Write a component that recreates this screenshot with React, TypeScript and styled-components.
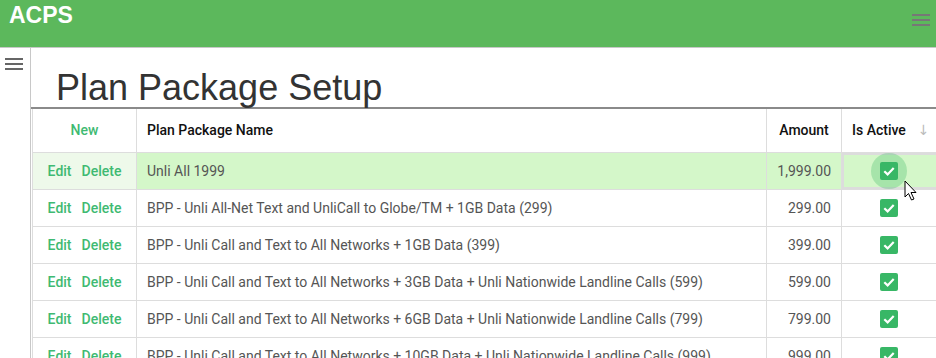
import React from 'react';
import styled, { createGlobalStyle } from 'styled-components';

const GlobalStyle = createGlobalStyle`
  html, body {
    margin: 0;
    padding: 0;
    background: #fff;
    overflow: hidden;
  }
`;

const Page = styled.div`
  width: 936px;
  height: 358px;
  overflow: hidden;
  font-family: Roboto, "Liberation Sans", sans-serif;
`;

const TopBar = styled.header`
  height: 48px;
  background: #5cb85c;
  border-bottom: 1px solid #c8c8c8;
  display: flex;
  justify-content: space-between;
  align-items: flex-start;
  padding: 0 6px 0 9px;
  box-sizing: border-box;
`;

const Brand = styled.div`
  font-family: "Liberation Sans", Arial, sans-serif;
  font-weight: bold;
  font-size: 23px;
  color: #fff;
  line-height: 31px;
`;

const Burger = styled.div<{ $top: number; $color?: string }>`
  width: 18px;
  margin-top: ${p => p.$top}px;
  display: flex;
  flex-direction: column;
  gap: 3px;
  span {
    display: block;
    height: 2px;
    background: ${p => p.$color || '#777'};
  }
`;

const Body = styled.div`
  display: flex;
  height: 310px;
`;

const Sidebar = styled.aside`
  width: 31px;
  flex-shrink: 0;
  border-right: 1px solid #c8c8c8;
  padding-left: 5px;
  box-sizing: border-box;
`;

const Main = styled.main`
  flex: 1;
  min-width: 0;
`;

const Title = styled.h1`
  margin: 0;
  height: 61px;
  padding: 20px 0 0 25px;
  box-sizing: border-box;
  font-family: "Liberation Sans", Arial, sans-serif;
  font-weight: normal;
  font-size: 36px;
  line-height: 40px;
  color: #333;
  border-bottom: 2px solid #8a8a8a;
`;

const Table = styled.table`
  border-collapse: collapse;
  table-layout: fixed;
  width: 1000px;
  margin-left: 1px;
  font-size: 14px;
`;

const Th = styled.th<{ $w: number; $align?: string }>`
  width: ${p => p.$w}px;
  height: 43px;
  box-sizing: border-box;
  border: 1px solid #ddd;
  border-top: none;
  padding: 0 10px;
  text-align: ${p => p.$align || 'left'};
  font-weight: 500;
  font-size: 14px;
  color: #111;
`;

const Row = styled.tr<{ $selected?: boolean }>`
  background: ${p => (p.$selected ? '#d4f7c9' : '#fff')};
`;

const Td = styled.td<{ $align?: string; $light?: boolean }>`
  height: 37px;
  box-sizing: border-box;
  border: 1px solid #ddd;
  padding: 0 10px;
  text-align: ${p => p.$align || 'left'};
  color: #555;
  white-space: nowrap;
  overflow: hidden;
  ${p => (p.$light ? 'background: #eef9ea;' : '')}
`;

const ActiveCell = styled.td<{ $focused?: boolean }>`
  height: 37px;
  box-sizing: border-box;
  border: 1px solid #ddd;
  ${p => (p.$focused ? 'box-shadow: inset 0 0 0 2px #dcdcdc;' : '')}
  padding: 0;
  text-align: left;
`;

const CheckWrap = styled.div`
  position: relative;
  width: 94px;
  display: flex;
  justify-content: center;
  align-items: center;
`;

const Ripple = styled.span`
  position: absolute;
  left: 29px;
  top: 50%;
  width: 36px;
  height: 36px;
  margin-top: -18px;
  border-radius: 50%;
  background: rgba(60, 185, 100, 0.3);
`;

const Check = styled.span`
  position: relative;
  width: 18px;
  height: 18px;
  border-radius: 2px;
  background: #38b766;
  display: flex;
  align-items: center;
  justify-content: center;
`;

const LinkBtn = styled.span`
  color: #3fba72;
  font-weight: 500;
  font-size: 14px;
  cursor: pointer;
`;

const Actions = styled.div`
  display: flex;
  justify-content: center;
  gap: 10px;
`;

const SortArrow = styled.span`
  color: #bbb;
  font-size: 14px;
  margin-left: 12px;
  font-family: "DejaVu Sans", sans-serif;
`;

const Cursor = styled.svg`
  position: absolute;
  left: 62px;
  top: 18px;
`;

const rows = [
  { name: 'Unli All 1999', amount: '1,999.00' },
  { name: 'BPP - Unli All-Net Text and UnliCall to Globe/TM + 1GB Data (299)', amount: '299.00' },
  { name: 'BPP - Unli Call and Text to All Networks + 1GB Data (399)', amount: '399.00' },
  { name: 'BPP - Unli Call and Text to All Networks + 3GB Data + Unli Nationwide Landline Calls (599)', amount: '599.00' },
  { name: 'BPP - Unli Call and Text to All Networks + 6GB Data + Unli Nationwide Landline Calls (799)', amount: '799.00' },
  { name: 'BPP - Unli Call and Text to All Networks + 10GB Data + Unli Nationwide Landline Calls (999)', amount: '999.00' },
];

const Tick = () => (
  <svg width="14" height="14" viewBox="0 0 14 14">
    <path d="M2.3 7.2 L5.6 10.4 L11.7 4" fill="none" stroke="#fff" strokeWidth="2.2" />
  </svg>
);

export default function App() {
  return (
    <Page>
      <GlobalStyle />
      <TopBar>
        <Brand>ACPS</Brand>
        <Burger $top={14}>
          <span />
          <span />
          <span />
        </Burger>
      </TopBar>
      <Body>
        <Sidebar>
          <Burger $top={10} $color="#666">
            <span />
            <span />
            <span />
          </Burger>
        </Sidebar>
        <Main>
          <Title>Plan Package Setup</Title>
          <Table>
            <thead>
              <tr>
                <Th $w={104} $align="center">
                  <LinkBtn>New</LinkBtn>
                </Th>
                <Th $w={630}>Plan Package Name</Th>
                <Th $w={75} $align="center">Amount</Th>
                <Th $w={191}>
                  Is Active<SortArrow>↓</SortArrow>
                </Th>
              </tr>
            </thead>
            <tbody>
              {rows.map((r, i) => (
                <Row key={r.name} $selected={i === 0}>
                  <Td $align="center" $light={i === 0}>
                    <Actions>
                      <LinkBtn>Edit</LinkBtn>
                      <LinkBtn>Delete</LinkBtn>
                    </Actions>
                  </Td>
                  <Td>{r.name}</Td>
                  <Td $align="right">{r.amount}</Td>
                  <ActiveCell $focused={i === 0}>
                    <CheckWrap>
                      {i === 0 && <Ripple />}
                      <Check>
                        <Tick />
                      </Check>
                      {i === 0 && (
                        <Cursor width="14" height="22" viewBox="0 0 14 22">
                          <path d="M1 1 L1 17 L4.5 13.5 L7.5 20 L10 19 L7 12.5 L12 12.5 Z" fill="#fff" stroke="#000" strokeWidth="1" />
                        </Cursor>
                      )}
                    </CheckWrap>
                  </ActiveCell>
                </Row>
              ))}
            </tbody>
          </Table>
        </Main>
      </Body>
    </Page>
  );
}
